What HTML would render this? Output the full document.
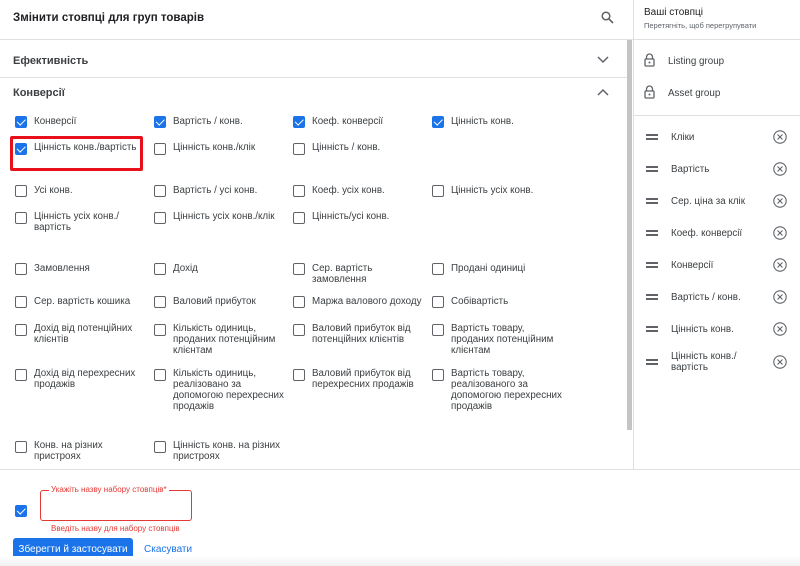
<!DOCTYPE html><html><head><meta charset="utf-8"><style>
*{margin:0;padding:0;box-sizing:border-box}
body{width:800px;height:566px;overflow:hidden;background:#fff;font-family:"Liberation Sans",sans-serif;color:#3c4043;position:relative}
.a{position:absolute}
.t{font-size:9.8px;line-height:11px;color:#3c4043}
.cb{position:absolute;width:12px;height:12px;border:1.6px solid #5f6368;border-radius:2px}
.cb.on{background:#1a73e8;border-color:#1a73e8}
.cb.on::after{content:"";position:absolute;left:2.5px;top:0px;width:3.5px;height:6.5px;border:solid #fff;border-width:0 1.6px 1.6px 0;transform:rotate(45deg)}
.h{height:1px;background:#e0e0e0;position:absolute}
.dr{position:absolute;width:12px;height:6px;border-top:2px solid #5f6368;border-bottom:2px solid #5f6368}
</style></head><body>
<div class="a" style="left:13px;top:12px;font-size:11.5px;font-weight:bold;color:#202124">Змінити стовпці для груп товарів</div>
<svg class="a" style="left:601px;top:11px" width="13" height="13" viewBox="0 0 13 13"><circle cx="5" cy="5" r="3.8" fill="none" stroke="#5f6368" stroke-width="1.5"/><path d="M8 8l4 4" stroke="#5f6368" stroke-width="1.6"/></svg>
<div class="h" style="left:0;top:39px;width:633px"></div>
<div class="a" style="left:13px;top:55px;font-size:11px;font-weight:bold;color:#3c4043">Ефективність</div>
<svg class="a" style="left:597px;top:56px" width="12" height="8"><path d="M1 1l5 5 5-5" fill="none" stroke="#5f6368" stroke-width="1.5"/></svg>
<div class="h" style="left:0;top:77px;width:627px"></div>
<div class="a" style="left:13px;top:87px;font-size:11px;font-weight:bold;color:#3c4043">Конверсії</div>
<svg class="a" style="left:597px;top:88px" width="12" height="8"><path d="M1 7l5-5 5 5" fill="none" stroke="#5f6368" stroke-width="1.5"/></svg>
<div class="a" style="left:627px;top:40px;width:5px;height:390px;background:#c4c4c4"></div>
<div class="a" style="left:633px;top:0;width:1px;height:469px;background:#e0e0e0"></div>
<div class="a" style="left:10px;top:136px;width:133px;height:35px;border:3px solid #e8101a;border-radius:2px"></div>

<div class="cb on" style="left:15px;top:116px"></div><div class="a t" style="left:34px;top:116px">Конверсії</div>
<div class="cb on" style="left:154px;top:116px"></div><div class="a t" style="left:173px;top:116px">Вартість / конв.</div>
<div class="cb on" style="left:293px;top:116px"></div><div class="a t" style="left:312px;top:116px">Коеф. конверсії</div>
<div class="cb on" style="left:432px;top:116px"></div><div class="a t" style="left:451px;top:116px">Цінність конв.</div>

<div class="cb on" style="left:15px;top:143px"></div><div class="a t" style="left:34px;top:142px">Цінність конв./вартість</div>
<div class="cb" style="left:154px;top:143px"></div><div class="a t" style="left:173px;top:142px">Цінність конв./клік</div>
<div class="cb" style="left:293px;top:143px"></div><div class="a t" style="left:312px;top:142px">Цінність / конв.</div>

<div class="cb" style="left:15px;top:185px"></div><div class="a t" style="left:34px;top:185px">Усі конв.</div>
<div class="cb" style="left:154px;top:185px"></div><div class="a t" style="left:173px;top:185px">Вартість / усі конв.</div>
<div class="cb" style="left:293px;top:185px"></div><div class="a t" style="left:312px;top:185px">Коеф. усіх конв.</div>
<div class="cb" style="left:432px;top:185px"></div><div class="a t" style="left:451px;top:185px">Цінність усіх конв.</div>

<div class="cb" style="left:15px;top:212px"></div><div class="a t" style="left:34px;top:211px">Цінність усіх конв./<br>вартість</div>
<div class="cb" style="left:154px;top:212px"></div><div class="a t" style="left:173px;top:211px">Цінність усіх конв./клік</div>
<div class="cb" style="left:293px;top:212px"></div><div class="a t" style="left:312px;top:211px">Цінність/усі конв.</div>

<div class="cb" style="left:15px;top:263px"></div><div class="a t" style="left:34px;top:263px">Замовлення</div>
<div class="cb" style="left:154px;top:263px"></div><div class="a t" style="left:173px;top:263px">Дохід</div>
<div class="cb" style="left:293px;top:263px"></div><div class="a t" style="left:312px;top:263px">Сер. вартість<br>замовлення</div>
<div class="cb" style="left:432px;top:263px"></div><div class="a t" style="left:451px;top:263px">Продані одиниці</div>

<div class="cb" style="left:15px;top:296px"></div><div class="a t" style="left:34px;top:296px">Сер. вартість кошика</div>
<div class="cb" style="left:154px;top:296px"></div><div class="a t" style="left:173px;top:296px">Валовий прибуток</div>
<div class="cb" style="left:293px;top:296px"></div><div class="a t" style="left:312px;top:296px">Маржа валового доходу</div>
<div class="cb" style="left:432px;top:296px"></div><div class="a t" style="left:451px;top:296px">Собівартість</div>

<div class="cb" style="left:15px;top:324px"></div><div class="a t" style="left:34px;top:323px">Дохід від потенційних<br>клієнтів</div>
<div class="cb" style="left:154px;top:324px"></div><div class="a t" style="left:173px;top:323px">Кількість одиниць,<br>проданих потенційним<br>клієнтам</div>
<div class="cb" style="left:293px;top:324px"></div><div class="a t" style="left:312px;top:323px">Валовий прибуток від<br>потенційних клієнтів</div>
<div class="cb" style="left:432px;top:324px"></div><div class="a t" style="left:451px;top:323px">Вартість товару,<br>проданих потенційним<br>клієнтам</div>

<div class="cb" style="left:15px;top:369px"></div><div class="a t" style="left:34px;top:368px">Дохід від перехресних<br>продажів</div>
<div class="cb" style="left:154px;top:369px"></div><div class="a t" style="left:173px;top:368px">Кількість одиниць,<br>реалізовано за<br>допомогою перехресних<br>продажів</div>
<div class="cb" style="left:293px;top:369px"></div><div class="a t" style="left:312px;top:368px">Валовий прибуток від<br>перехресних продажів</div>
<div class="cb" style="left:432px;top:369px"></div><div class="a t" style="left:451px;top:368px">Вартість товару,<br>реалізованого за<br>допомогою перехресних<br>продажів</div>

<div class="cb" style="left:15px;top:441px"></div><div class="a t" style="left:34px;top:440px">Конв. на різних<br>пристроях</div>
<div class="cb" style="left:154px;top:441px"></div><div class="a t" style="left:173px;top:440px">Цінність конв. на різних<br>пристроях</div>

<div class="a" style="left:644px;top:7px;font-size:10px;color:#202124">Ваші стовпці</div>
<div class="a" style="left:644px;top:21px;font-size:7.5px;color:#5f6368">Перетягніть, щоб перегрупувати</div>
<div class="h" style="left:634px;top:39px;width:166px"></div>
<svg class="a" style="left:644px;top:53px" width="11" height="14"><path d="M2.5 6V4a3 3 0 0 1 6 0v2" fill="none" stroke="#5f6368" stroke-width="1.3"/><rect x="1" y="6" width="9" height="7" rx="1" fill="none" stroke="#5f6368" stroke-width="1.3"/><circle cx="5.5" cy="9.5" r="1" fill="#5f6368"/></svg>
<div class="a t" style="left:668px;top:56px">Listing group</div>
<svg class="a" style="left:644px;top:85px" width="11" height="14"><path d="M2.5 6V4a3 3 0 0 1 6 0v2" fill="none" stroke="#5f6368" stroke-width="1.3"/><rect x="1" y="6" width="9" height="7" rx="1" fill="none" stroke="#5f6368" stroke-width="1.3"/><circle cx="5.5" cy="9.5" r="1" fill="#5f6368"/></svg>
<div class="a t" style="left:668px;top:88px">Asset group</div>
<div class="h" style="left:634px;top:115px;width:166px"></div>

<svg width="0" height="0" style="position:absolute"><defs><g id="xc"><circle cx="7" cy="7" r="6.2" fill="none" stroke="#5f6368" stroke-width="1.1"/><path d="M4.5 4.5l5 5M9.5 4.5l-5 5" stroke="#5f6368" stroke-width="1.1"/></g></defs></svg>
<div class="dr" style="left:646px;top:134px"></div><div class="a t" style="left:671px;top:132px">Кліки</div><svg class="a" style="left:773px;top:130px" width="14" height="14"><use href="#xc"/></svg>
<div class="dr" style="left:646px;top:166px"></div><div class="a t" style="left:671px;top:164px">Вартість</div><svg class="a" style="left:773px;top:162px" width="14" height="14"><use href="#xc"/></svg>
<div class="dr" style="left:646px;top:198px"></div><div class="a t" style="left:671px;top:196px">Сер. ціна за клік</div><svg class="a" style="left:773px;top:194px" width="14" height="14"><use href="#xc"/></svg>
<div class="dr" style="left:646px;top:230px"></div><div class="a t" style="left:671px;top:228px">Коеф. конверсії</div><svg class="a" style="left:773px;top:226px" width="14" height="14"><use href="#xc"/></svg>
<div class="dr" style="left:646px;top:262px"></div><div class="a t" style="left:671px;top:260px">Конверсії</div><svg class="a" style="left:773px;top:258px" width="14" height="14"><use href="#xc"/></svg>
<div class="dr" style="left:646px;top:294px"></div><div class="a t" style="left:671px;top:292px">Вартість / конв.</div><svg class="a" style="left:773px;top:290px" width="14" height="14"><use href="#xc"/></svg>
<div class="dr" style="left:646px;top:326px"></div><div class="a t" style="left:671px;top:324px">Цінність конв.</div><svg class="a" style="left:773px;top:322px" width="14" height="14"><use href="#xc"/></svg>
<div class="dr" style="left:646px;top:359px"></div><div class="a t" style="left:671px;top:351px">Цінність конв./<br>вартість</div><svg class="a" style="left:773px;top:355px" width="14" height="14"><use href="#xc"/></svg>

<div class="h" style="left:0;top:469px;width:800px"></div>
<div class="cb on" style="left:15px;top:505px"></div>
<div class="a" style="left:40px;top:490px;width:152px;height:31px;border:1.5px solid #e53935;border-radius:3px"></div>
<div class="a" style="left:49px;top:485px;background:#fff;padding:0 2px;font-size:8px;color:#e53935">Укажіть назву набору стовпців*</div>
<div class="a" style="left:51px;top:524px;font-size:8px;color:#e53935">Введіть назву для набору стовпців</div>
<div class="a" style="left:13px;top:538px;width:120px;height:24px;background:#1a73e8;border-radius:3px;color:#fff;font-size:10px;line-height:24px;text-align:center">Зберегти й застосувати</div>
<div class="a" style="left:144px;top:544px;font-size:10px;color:#1a73e8">Скасувати</div>
<div class="a" style="left:0;top:556px;width:800px;height:10px;background:linear-gradient(#fff,#f1f1f1)"></div>
</body></html>
